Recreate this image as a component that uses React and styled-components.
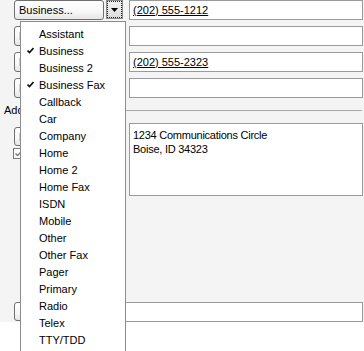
import React from "react";
import styled, { createGlobalStyle } from "styled-components";

const Global = createGlobalStyle`
   html, body {
      margin: 0;
      padding: 0;
      background: #ffffff;
   }
   body {
      font-family: "Liberation Sans", Arial, sans-serif;
      font-size: 11px;
      color: #000;
   }
`;

const Page = styled.div`
   position: relative;
   width: 364px;
   height: 351px;
   overflow: hidden;
`;

const Form = styled.div`
   height: 322px;
   background: #f4f4f4;
   display: flex;
   flex-direction: column;
`;

const Phones = styled.div`
   display: flex;
   flex-direction: column;
   gap: 6px;
`;

const Row = styled.div`
   display: flex;
   align-items: flex-start;
`;

const Left = styled.div`
   width: ${(p) => p.$width || 129}px;
   flex: none;
   padding-left: 14px;
   padding-top: ${(p) => p.$top || 0}px;
   box-sizing: border-box;
   display: flex;
   flex-direction: column;
   gap: 2px;
`;

const ButtonLine = styled.div`
   display: flex;
   gap: 2px;
`;

const FieldButton = styled.div`
   width: 90px;
   height: ${(p) => p.$h || 20}px;
   box-sizing: border-box;
   border: 1px solid #6f6f6f;
   border-radius: 3px;
   background: linear-gradient(#ffffff, #f7f7f7 60%, #e6e6e6);
   padding-left: 4px;
   display: flex;
   align-items: center;
   white-space: nowrap;
   overflow: hidden;
`;

const ArrowButton = styled.div`
   width: 17px;
   height: 19px;
   box-sizing: border-box;
   border: 1px solid #8a8a8a;
   outline: 1px dotted #222;
   outline-offset: -2px;
   background: linear-gradient(#f2f2f2, #dcdcdc);
   display: flex;
   align-items: center;
   justify-content: center;
`;

const Field = styled.div`
   flex: 1;
   margin-right: 1px;
   height: ${(p) => p.$h || 20}px;
   box-sizing: border-box;
   border: 1px solid #9a9a9a;
   background: #fff;
   padding: ${(p) => (p.$multi ? "4px 3px" : "0 3px")};
   display: flex;
   flex-direction: column;
   justify-content: ${(p) => (p.$multi ? "flex-start" : "center")};
   line-height: 14px;
   letter-spacing: ${(p) => (p.$multi ? "-0.25px" : "0")};
   white-space: nowrap;
`;

const Phone = styled.span`
   text-decoration: underline;
`;

const Section = styled.div`
   display: flex;
   align-items: center;
   gap: 4px;
   height: 14px;
   margin: 5px 0 6px 4px;
`;

const Rule = styled.div`
   flex: 1;
   height: 1px;
   margin-right: 2px;
   background: #a8a8a8;
`;

const Box = styled.span`
   width: 9px;
   height: 9px;
   margin-left: -1px;
   border: 1px solid #7a7a7a;
   background: #fff;
   display: flex;
   align-items: center;
   justify-content: center;
`;

const Spacer = styled.div`
   flex: 1;
`;

const Menu = styled.div`
   position: absolute;
   left: 20px;
   top: 21px;
   width: 106px;
   height: 340px;
   box-sizing: border-box;
   border: 1px solid #8c8c8c;
   background: #fff;
   padding-top: 3px;
`;

const Item = styled.div`
   height: 17px;
   display: flex;
   align-items: center;
   padding-left: 18px;
   position: relative;
`;

const Tick = styled.svg`
   position: absolute;
   left: 6px;
   top: 5px;
`;

const items = [
   ["Assistant"],
   ["Business", true],
   ["Business 2"],
   ["Business Fax", true],
   ["Callback"],
   ["Car"],
   ["Company"],
   ["Home"],
   ["Home 2"],
   ["Home Fax"],
   ["ISDN"],
   ["Mobile"],
   ["Other"],
   ["Other Fax"],
   ["Pager"],
   ["Primary"],
   ["Radio"],
   ["Telex"],
   ["TTY/TDD"],
];

const Check = () => (
   <Tick width="7" height="7" viewBox="0 0 7 7">
      <path d="M0.5 3.5 L2.5 5.5 L6.5 1" stroke="#111" strokeWidth="1.7" fill="none" />
   </Tick>
);

export default function App() {
   return (
      <Page>
         <Global />
         <Form>
            <Phones>
               <Row>
                  <Left>
                     <ButtonLine>
                        <FieldButton>Business...</FieldButton>
                        <ArrowButton>
                           <svg width="7" height="4" viewBox="0 0 7 4">
                              <path d="M0 0 H7 L3.5 4 Z" fill="#000" />
                           </svg>
                        </ArrowButton>
                     </ButtonLine>
                  </Left>
                  <Field>
                     <Phone>(202) 555-1212</Phone>
                  </Field>
               </Row>
               <Row>
                  <Left>
                     <FieldButton>Home</FieldButton>
                  </Left>
                  <Field />
               </Row>
               <Row>
                  <Left>
                     <FieldButton>Fax</FieldButton>
                  </Left>
                  <Field>
                     <Phone>(202) 555-2323</Phone>
                  </Field>
               </Row>
               <Row>
                  <Left>
                     <FieldButton>Mobile</FieldButton>
                  </Left>
                  <Field />
               </Row>
            </Phones>
            <Section>
               <span>Addresses</span>
               <Rule />
            </Section>
            <Row>
               <Left $top={4}>
                  <FieldButton $h={19}>Business</FieldButton>
                  <Box>
                     <svg width="7" height="6" viewBox="0 0 7 6">
                        <path d="M0.5 2.5 L2.5 4.5 L6.5 0.5" stroke="#777" strokeWidth="1.3" fill="none" />
                     </svg>
                  </Box>
               </Left>
               <Field $multi $h={73}>
                  <span>1234 Communications Circle</span>
                  <span>Boise, ID 34323</span>
               </Field>
            </Row>
            <Spacer />
            <Row>
               <Left $width={110}>
                  <FieldButton $h={19} />
               </Left>
               <Field />
            </Row>
         </Form>
         <Menu>
            {items.map(([label, checked]) => (
               <Item key={label}>
                  {checked && <Check />}
                  {label}
               </Item>
            ))}
         </Menu>
      </Page>
   );
}
